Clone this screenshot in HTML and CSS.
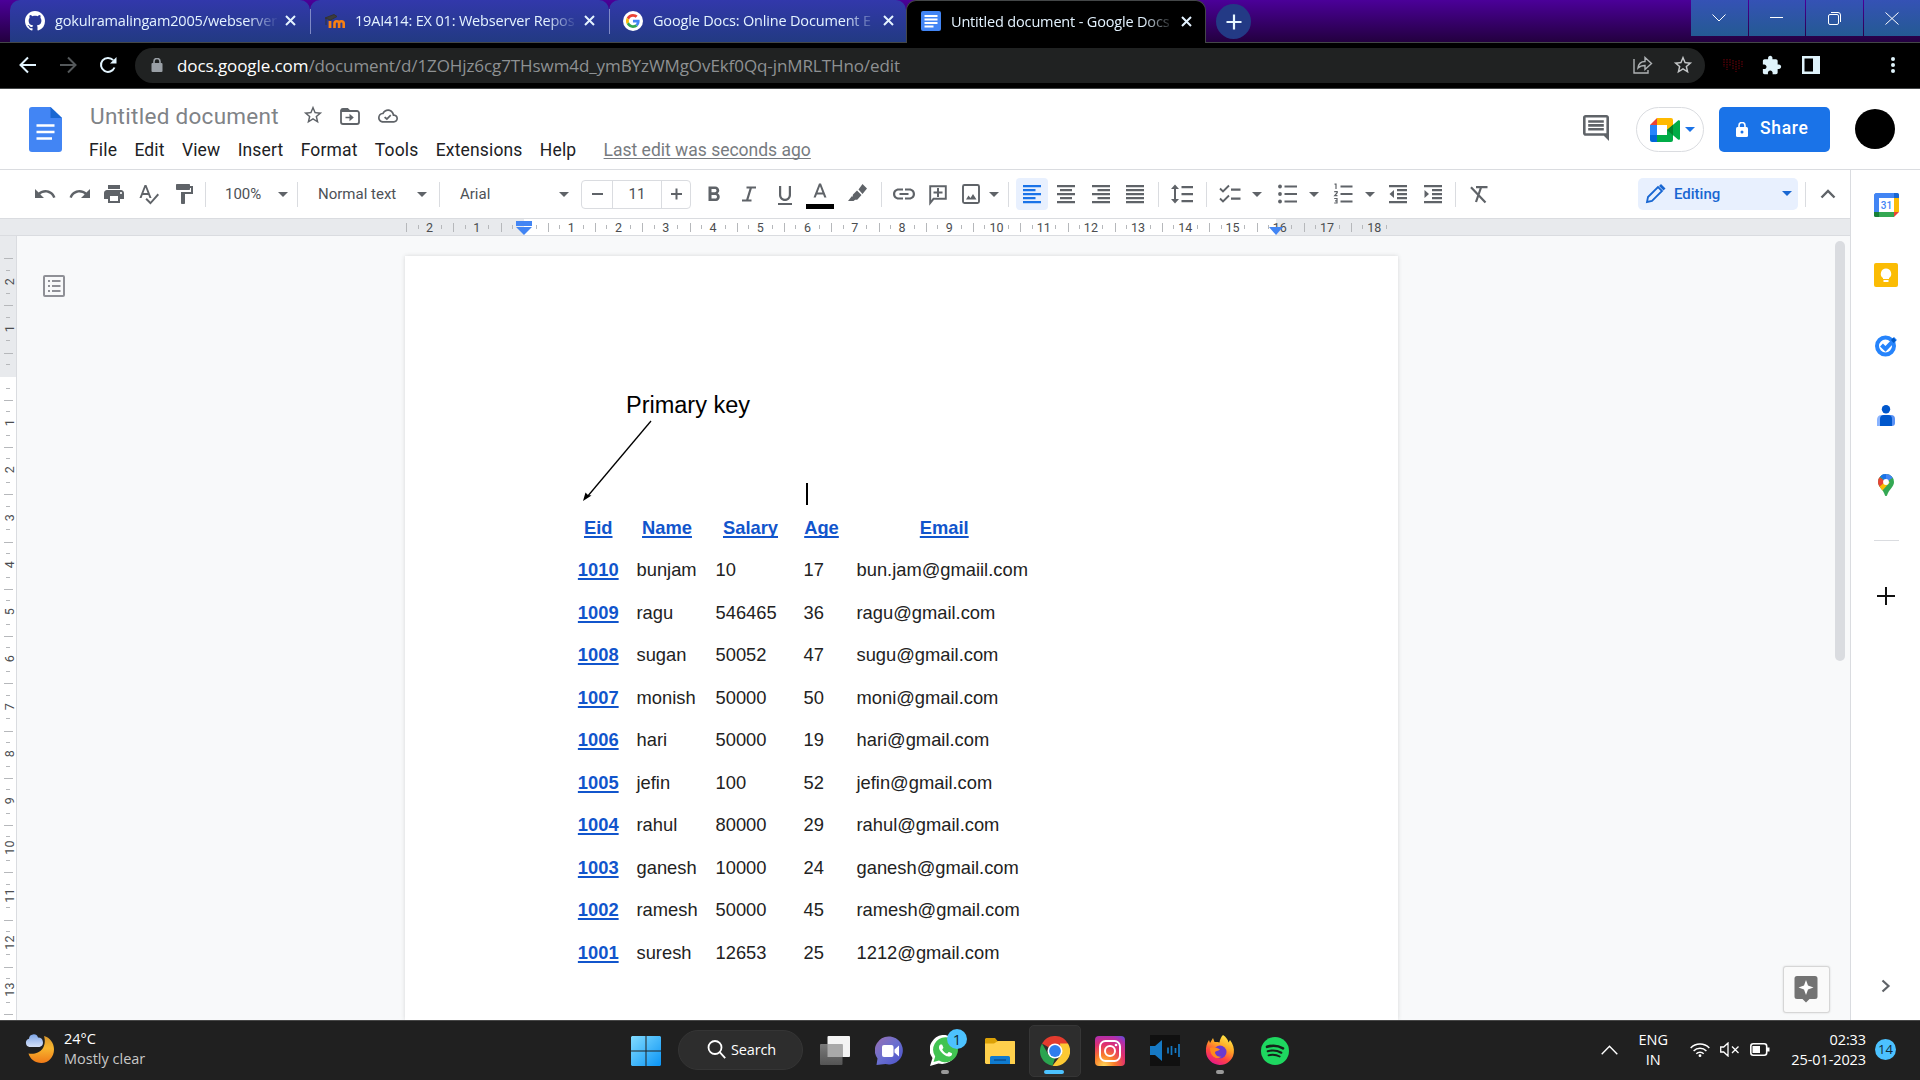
FILE: index.html
```html
<!DOCTYPE html>
<html lang="en">
<head>
<meta charset="utf-8">
<title>Untitled document - Google Docs</title>
<link rel="stylesheet" href="styles.css">
</head>
<body>
<div class="screen">

<div class="tabstrip">
  <div class="tab">
    <svg width="20" height="20" viewBox="0 0 16 16" fill="#fff"><path d="M8 0C3.58 0 0 3.58 0 8c0 3.54 2.29 6.53 5.47 7.59.4.07.55-.17.55-.38 0-.19-.01-.82-.01-1.49-2.01.37-2.53-.49-2.69-.94-.09-.23-.48-.94-.82-1.13-.28-.15-.68-.52-.01-.53.63-.01 1.08.58 1.23.82.72 1.21 1.87.87 2.33.66.07-.52.28-.87.51-1.07-1.78-.2-3.64-.89-3.64-3.95 0-.87.31-1.59.82-2.15-.08-.2-.36-1.02.08-2.12 0 0 .67-.21 2.2.82.64-.18 1.32-.27 2-.27.68 0 1.36.09 2 .27 1.53-1.04 2.2-.82 2.2-.82.44 1.1.16 1.92.08 2.12.51.56.82 1.27.82 2.15 0 3.07-1.87 3.75-3.65 3.95.29.25.54.73.54 1.48 0 1.07-.01 1.93-.01 2.2 0 .21.15.46.55.38A8.013 8.013 0 0016 8c0-4.42-3.58-8-8-8z"/></svg>
    <span class="tab-title">gokulramalingam2005/webserver</span>
    <svg class="x" width="11" height="11" viewBox="0 0 11 11"><path d="M1 1l9 9M10 1l-9 9"/></svg>
  </div>
  <div class="tab divided">
    <svg width="20" height="20" viewBox="0 0 20 20"><path d="M5 17V10" fill="none" stroke="#f98012" stroke-width="2.800"/><path d="M9.500 17v-4.500a2.300 2.300 0 0 1 4.600 0V17M14.100 17v-4.500a2.300 2.300 0 0 1 4.600 0V17" fill="none" stroke="#f98012" stroke-width="2.600"/><path d="M0 7l9-3.500 3 2L5.500 9zM1 7v7" fill="#3c3c3c" stroke="#333"/></svg>
    <span class="tab-title">19AI414: EX 01: Webserver Repos</span>
    <svg class="x" width="11" height="11" viewBox="0 0 11 11"><path d="M1 1l9 9M10 1l-9 9"/></svg>
  </div>
  <div class="tab divided third">
    <svg width="20" height="20" viewBox="0 0 20 20"><circle cx="10" cy="10" r="10" fill="#fff"/><g transform="translate(3 3) scale(.29)"><path fill="#EA4335" d="M24 9.500c3.540 0 6.710 1.220 9.210 3.600l6.850-6.850C35.900 2.380 30.470 0 24 0 14.620 0 6.510 5.380 2.560 13.220l7.980 6.190C12.430 13.720 17.740 9.500 24 9.500z"/><path fill="#4285F4" d="M46.980 24.550c0-1.570-.15-3.090-.38-4.550H24v9.020h12.940c-.58 2.960-2.260 5.480-4.780 7.180l7.730 6c4.510-4.180 7.090-10.360 7.090-17.650z"/><path fill="#FBBC05" d="M10.530 28.590c-.48-1.450-.76-2.990-.76-4.590s.27-3.140.76-4.590l-7.980-6.190C.92 16.460 0 20.120 0 24c0 3.880.92 7.540 2.560 10.780l7.970-6.190z"/><path fill="#34A853" d="M24 48c6.480 0 11.930-2.130 15.890-5.810l-7.730-6c-2.150 1.450-4.920 2.300-8.160 2.300-6.260 0-11.570-4.220-13.470-9.910l-7.980 6.190C6.510 42.620 14.620 48 24 48z"/></g></svg>
    <span class="tab-title">Google Docs: Online Document E</span>
    <svg class="x" width="11" height="11" viewBox="0 0 11 11"><path d="M1 1l9 9M10 1l-9 9"/></svg>
  </div>
  <div class="tab active">
    <svg width="20" height="20" viewBox="0 0 20 20"><rect width="20" height="20" rx="2" fill="#4285f4"/><path d="M3.500 5h13M3.500 8.500h13M3.500 12h13M3.500 15.500h9" stroke="#fff" stroke-width="2"/></svg>
    <span class="tab-title">Untitled document - Google Docs</span>
    <svg class="x" width="11" height="11" viewBox="0 0 11 11"><path d="M1 1l9 9M10 1l-9 9"/></svg>
  </div>
  <div class="newtab"><svg width="16" height="16" viewBox="0 0 16 16"><path d="M8 .5v15M.5 8h15" stroke="#e8f6ff" stroke-width="2.200"/></svg></div>
  <div class="winbtns">
    <span><svg width="14" height="8" viewBox="0 0 14 8"><path d="M.5.500l6.500 6.500 6.500-6.500"/></svg></span>
    <span><svg width="13" height="2" viewBox="0 0 13 2"><path d="M0 .5h13"/></svg></span>
    <span><svg width="13" height="13" viewBox="0 0 13 13"><rect x=".5" y="2.500" width="10" height="10" rx="1.500"/><path d="M3 .500h7a2.500 2.500 0 0 1 2.500 2.500v7"/></svg></span>
    <span><svg width="14" height="13" viewBox="0 0 14 13"><path d="M.5.500l13 12M13.500.500l-13 12"/></svg></span>
  </div>
</div>

<div class="navbar">
  <svg class="nav" width="18" height="18" viewBox="0 0 18 18"><path d="M17 9H2M9 1.500L1.500 9 9 16.500"/></svg>
  <svg class="nav off" width="18" height="18" viewBox="0 0 18 18"><path d="M1 9h15M9 1.500L16.500 9 9 16.500"/></svg>
  <svg class="nav" width="18" height="18" viewBox="0 0 18 18"><path d="M15.500 11.500a7 7 0 1 1-1.300-7.300"/><path d="M17.500 1v6.500H11z" fill="#e3f5ff" stroke="none"/></svg>
  <div class="omnibox">
    <svg width="12" height="14" viewBox="0 0 12 14"><rect x=".5" y="5" width="11" height="9" rx="1" fill="#9aa0a6"/><path d="M3 6V3.500a3 3 0 0 1 6 0V6" fill="none" stroke="#9aa0a6" stroke-width="1.600"/></svg>
    <span class="url"><b>docs.google.com</b>/document/d/1ZOHjz6cg7THswm4d_ymBYzWMgOvEkf0Qq-jnMRLTHno/edit</span>
    <svg width="20" height="18" viewBox="0 0 20 18" fill="none" stroke="#aeb2b4" stroke-width="1.400"><path d="M1 3v14h14v-3"/><path d="M5 12c.5-4 3-6.500 7-6.500V1.500l6.500 6-6.500 6V9.500c-3 0-5 .5-7 2.500z"/></svg>
    <svg class="star" width="22" height="22" viewBox="0 0 24 24" fill="#c4c7c8"><path d="M22 9.240l-7.190-.62L12 2 9.190 8.630 2 9.240l5.460 4.730L5.820 21 12 17.270 18.180 21l-1.630-7.030L22 9.240zM12 15.400l-3.760 2.270 1-4.280-3.320-2.880 4.380-.38L12 6.100l1.710 4.040 4.380.38-3.320 2.880 1 4.280L12 15.400z"/></svg>
  </div>
  <div class="exts">
    <svg width="22" height="14" viewBox="0 0 22 14" stroke="#3a0005" stroke-width="2" stroke-dasharray="1.500 1"><path d="M2 1v8M5 1v11M8 1v7M11 2v9M14 3v11M17 2v9M20 3v6"/></svg>
    <svg width="20" height="20" viewBox="1 0 23 23" fill="#dff3fb"><path d="M20.500 11H19V7c0-1.100-.9-2-2-2h-4V3.500C13 2.120 11.880 1 10.500 1S8 2.120 8 3.500V5H4c-1.100 0-1.990.9-1.990 2v3.800H3.500c1.490 0 2.700 1.210 2.700 2.700s-1.210 2.700-2.700 2.700H2V20c0 1.100.9 2 2 2h3.800v-1.500c0-1.490 1.210-2.700 2.700-2.700 1.490 0 2.700 1.210 2.700 2.700V22H17c1.100 0 2-.9 2-2v-4h1.500c1.380 0 2.500-1.120 2.500-2.500S21.880 11 20.500 11z"/></svg>
    <svg width="18" height="18" viewBox="0 0 18 18"><rect width="18" height="18" fill="#dff3fb"/><rect x="2.500" y="2.500" width="8.500" height="13" fill="#000"/></svg>
    <svg width="4" height="18" viewBox="0 0 4 18" fill="#dff3fb"><circle cx="2" cy="3" r="2"/><circle cx="2" cy="9" r="2"/><circle cx="2" cy="15" r="2"/></svg>
  </div>
</div>

<header class="dochead">
  <svg class="doclogo" width="33" height="45" viewBox="0 0 33 45"><path d="M3 0h18.500L33 11v31a3 3 0 0 1-3 3H3a3 3 0 0 1-3-3V3a3 3 0 0 1 3-3z" fill="#4285f4"/><path d="M21.500 0L33 11H21.500z" fill="#1967d2"/><path d="M7.500 18.500h18M7.500 25h18M7.500 31.500h15.500" stroke="#fff" stroke-width="2.600"/></svg>
  <div class="titles">
    <div class="titlerow">
      <span class="doctitle">Untitled document</span>
      <svg class="i-star" width="22" height="22" viewBox="0 0 24 24"><path d="M22 9.240l-7.190-.62L12 2 9.190 8.630 2 9.240l5.460 4.730L5.820 21 12 17.270 18.180 21l-1.630-7.030L22 9.240zM12 15.400l-3.760 2.270 1-4.280-3.320-2.880 4.380-.38L12 6.100l1.710 4.040 4.380.38-3.320 2.880 1 4.280L12 15.400z"/></svg>
      <svg class="i-move" width="20" height="17" viewBox="0 0 20 17"><path d="M1 2.500V14a2 2 0 0 0 2 2h14a2 2 0 0 0 2-2V5a2 2 0 0 0-2-2H9.500L7.500 1H3a2 2 0 0 0-2 1.500z" fill="none" stroke="#5f6368" stroke-width="1.800"/><path d="M1 1h7l2 3H1z"/><path d="M5.500 8.700h4V5.800l4.300 3.700-4.300 3.700v-2.900h-4z"/></svg>
      <svg class="i-cloud" width="20" height="20" viewBox="0 0 24 24"><path d="M19.350 10.040C18.670 6.590 15.640 4 12 4 9.110 4 6.600 5.640 5.350 8.040 2.340 8.360 0 10.910 0 14c0 3.310 2.690 6 6 6h13c2.760 0 5-2.240 5-5 0-2.640-2.050-4.780-4.650-4.960zM19 18H6c-2.210 0-4-1.790-4-4 0-2.050 1.530-3.760 3.560-3.970l1.070-.11.5-.95C8.080 7.140 9.940 6 12 6c2.620 0 4.880 1.860 5.390 4.430l.3 1.500 1.530.11c1.560.1 2.780 1.410 2.780 2.960 0 1.650-1.350 3-3 3zm-8.300-3.820l-2.090-1.590-1.410 1.410L10.700 17l5.310-5.310-1.410-1.410z"/></svg>
    </div>
    <nav class="menus">
      <span>File</span><span>Edit</span><span>View</span><span>Insert</span><span>Format</span><span>Tools</span><span>Extensions</span><span>Help</span><span class="lastedit">Last edit was seconds ago</span>
    </nav>
  </div>
  <svg class="i-comments" width="26" height="26" viewBox="2 2 20 20"><path d="M21.990 4c0-1.100-.89-2-1.990-2H4c-1.100 0-2 .9-2 2v12c0 1.100.9 2 2 2h14l4 4-.01-18zM20 4v12H4V4h16zM6 12h12v2H6zm0-3h12v2H6zm0-3h12v2H6z"/></svg>
  <div class="meet">
    <svg width="30" height="24" viewBox="0 0 30 24"><path d="M0 7h7V0z" fill="#ea4335"/><path d="M0 7h7v10H0z" fill="#2684fc"/><path d="M0 17h7v7H2a2 2 0 0 1-2-2z" fill="#0066da"/><path d="M7 0h14a2 2 0 0 1 2 2v9l-6 4V7H7z" fill="#ffba00"/><path d="M7 17h10v-5l6-2v12a2 2 0 0 1-2 2H7z" fill="#00ac47"/><path d="M17 12l11-9.500c.8-.6 2-.2 2 .8v17.400c0 1-1.200 1.500-2 .8z" fill="#00ac47"/><path d="M17 12l6-5.200v10.400z" fill="#00832d"/></svg>
    <svg width="10" height="5" viewBox="0 0 10 5"><path d="M0 0h10L5 5z" fill="#1a73e8"/></svg>
  </div>
  <div class="share">
    <svg width="12" height="15" viewBox="0 0 12 15"><rect y="5" width="12" height="10" rx="1.500" fill="#fff"/><path d="M3 6V3.500a3 3 0 0 1 6 0V6" fill="none" stroke="#fff" stroke-width="1.600"/><circle cx="6" cy="10" r="1.500" fill="#1a73e8"/></svg>
    <span>Share</span>
  </div>
  <div class="avatar"></div>
</header>

<div class="workspace">
  <main class="editor">
    <div class="toolbar">
      <svg viewBox="0 0 24 24"><path d="M12.500 8c-2.650 0-5.050.99-6.900 2.600L2 7v9h9l-3.620-3.620c1.390-1.160 3.160-1.880 5.120-1.880 3.540 0 6.550 2.310 7.600 5.500l2.370-.78C21.080 11.030 17.150 8 12.500 8z"/></svg>
      <svg viewBox="0 0 24 24"><path d="M18.400 10.600C16.550 8.990 14.150 8 11.500 8c-4.650 0-8.580 3.030-9.960 7.220L3.900 16c1.050-3.190 4.050-5.500 7.600-5.500 1.950 0 3.730.72 5.120 1.880L13 16h9V7l-3.600 3.600z"/></svg>
      <svg viewBox="0 0 24 24"><path d="M19 8H5c-1.660 0-3 1.340-3 3v6h4v4h12v-4h4v-6c0-1.660-1.340-3-3-3zm-3 11H8v-5h8v5zm3-7c-.55 0-1-.45-1-1s.45-1 1-1 1 .45 1 1-.45 1-1 1zm-1-9H6v4h12V3z"/></svg>
      <svg viewBox="0 0 24 24"><path d="M12.450 16h2.090L9.430 3H7.570L2.460 16h2.090l1.120-3h5.640l1.140 3zm-6.020-5L8.500 5.480 10.570 11H6.430zm14.160 .590l-7.090 8.090L9.830 16l-1.410 1.410 5.090 5.090L22 13l-1.410-1.410z"/></svg>
      <svg viewBox="0 0 24 24"><path d="M18 4V3c0-.55-.45-1-1-1H5c-.55 0-1 .45-1 1v4c0 .55.45 1 1 1h12c.55 0 1-.45 1-1V6h1v4H9v11c0 .55.45 1 1 1h2c.55 0 1-.45 1-1v-9h8V4h-3z"/></svg>
      <i class="sep"></i>
      <span class="zoomtxt">100%</span>
      <b class="arr"></b>
      <i class="sep"></i>
      <span class="styletxt">Normal text</span>
      <b class="arr"></b>
      <i class="sep"></i>
      <span class="fonttxt">Arial</span>
      <b class="arr"></b>
      <div class="stepper"><span><i class="minus"></i></span><span>11</span><span><i class="minus"></i><i class="minus vert"></i></span></div>
      <svg viewBox="0 0 24 24"><path d="M15.600 11.290c.97-.67 1.650-1.770 1.650-2.790 0-2.260-1.750-4-4-4H6.500v14.500h7.540c2.090 0 3.710-1.700 3.710-3.990 0-1.520-.86-2.920-2.150-3.720zM9.500 7h3.500c.83 0 1.500.67 1.500 1.500s-.67 1.700-1.500 1.700h-3.500v-3.200zm4 9.500h-4v-3.500h4c.83 0 1.500.87 1.500 1.700s-.67 1.800-1.500 1.800z"/></svg>
      <svg viewBox="0 0 24 24"><path d="M9.500 5.500H19M5 18.500h9.500M14 5.500L10 18.500" fill="none" stroke="#5f6368" stroke-width="2.200"/></svg>
      <svg viewBox="0 0 24 24"><path d="M12 19c3.310 0 6-2.690 6-6V4h-2.200v9c0 2.100-1.700 3.800-3.800 3.800S8.200 15.100 8.200 13V4H6v9c0 3.310 2.690 6 6 6zm-7 2v2h14v-2H5z"/></svg>
      <svg width="28" height="32" viewBox="-2 -4 28 32" class="tcolor"><path d="M11 1.500L5.500 15.500h2.250l1.120-3h6.250l1.120 3h2.250L13 1.500h-2zm-1.380 9L12 4.170 14.380 10.500H9.620z"/><path d="M-2 22h28v5H-2z" fill="#000"/></svg>
      <svg viewBox="0 0 24 24"><path d="M3 19l4-5 3.500 3.500-2 1.500zM8 12.500l4-4 4.500 4.500-4 4.500c-1 .5-2 .3-3-.7s-2.500-2.500-1.500-4.300zM13.500 7.500L17.500 2l4.500 4.500-4.500 5.500z" /></svg>
      <i class="sep"></i>
      <svg viewBox="0 0 24 24"><path d="M3.200 12c0-2 1.500-3.500 3.300-3.500H11V6.500H6.500c-3 0-5.500 2.300-5.500 5.500s2.500 5.500 5.500 5.500H11v-2H6.500C4.700 15.500 3.200 14 3.200 12zM7.500 13.100h9v-2.200h-9v2.200zM17.500 6.500H13v2h4.500c1.800 0 3.300 1.500 3.300 3.500s-1.500 3.500-3.300 3.500H13v2h4.500c3 0 5.500-2.300 5.500-5.500s-2.500-5.500-5.500-5.500z"/></svg>
      <svg viewBox="0 0 24 24"><path d="M4.200 21V4.200h15.600v12.600H7.500z" fill="none" stroke="#5f6368" stroke-width="1.900"/><path d="M11 6h2v3.500h3.500v2H13V15h-2v-3.500H7.500v-2H11z"/></svg>
      <svg viewBox="0 0 24 24"><rect x="4" y="3" width="16" height="18" rx="1.500" fill="none" stroke="#5f6368" stroke-width="1.900"/><path d="M7 17.500l2.500-4 2 2.500 2.500-4 3.500 5.500z"/></svg>
      <b class="arr"></b>
      <i class="sep"></i>
      <span class="on"><svg viewBox="0 0 24 24"><path d="M3 3h18v2.200H3zM3 7h12.500v2.200H3zM3 11h18v2.200H3zM3 15h12.500v2.200H3zM3 19h18v2.200H3z"/></svg></span>
      <svg viewBox="0 0 24 24"><path d="M3 3h18v2.200H3zM6 7h12v2.200H6zM3 11h18v2.200H3zM6 15h12v2.200H6zM3 19h18v2.200H3z"/></svg>
      <svg viewBox="0 0 24 24"><path d="M3 3h18v2.200H3zM8.500 7H21v2.200H8.500zM3 11h18v2.200H3zM8.500 15H21v2.200H8.500zM3 19h18v2.200H3z"/></svg>
      <svg viewBox="0 0 24 24"><path d="M3 3h18v2.200H3zM3 7h18v2.200H3zM3 11h18v2.200H3zM3 15h18v2.200H3zM3 19h18v2.200H3z"/></svg>
      <i class="sep"></i>
      <svg viewBox="0 0 24 24"><path d="M5 2.500L9 7H6v10h3l-4 4.500L1 17h3V7H1zM11.500 4H23v2.200H11.500zM11.500 11H23v2.200H11.500zM11.500 18H23v2.200H11.500z"/></svg>
      <i class="sep"></i>
      <svg viewBox="0 0 24 24"><path d="M2 6.500l3 3L11 3.500M2 16.500l3 3 6-6" fill="none" stroke="#5f6368" stroke-width="1.900"/><path d="M13 6.500h9.500v2.200H13zM13 15.500h9.500v2.200H13z"/></svg>
      <b class="arr"></b>
      <svg viewBox="0 0 24 24"><circle cx="5" cy="4.500" r="1.900"/><circle cx="5" cy="12" r="1.900"/><circle cx="5" cy="19.500" r="1.900"/><path d="M9.500 3.400H22v2.200H9.500zM9.500 10.900H22v2.200H9.500zM9.500 18.400H22v2.200H9.500z"/></svg>
      <b class="arr"></b>
      <svg viewBox="0 0 24 24"><path d="M9.500 3.400H21.500v2.200H9.500zM9.500 10.900H21.500v2.200H9.500zM9.500 18.400H21.500v2.200H9.500z"/><path d="M3.500 2.200h1.500V7M3.200 9.700h3v1L3.700 13.700h2.800M3.200 16.500h2.800v4.500H3.200M4 18.800h2" fill="none" stroke="#5f6368" stroke-width="1.200"/></svg>
      <b class="arr"></b>
      <svg viewBox="0 0 24 24"><path d="M3 3h18v2.200H3zM11 7h10v2.200H11zM11 11h10v2.200H11zM11 15h10v2.200H11zM3 19h18v2.200H3zM8 8v8l-4.500-4z"/></svg>
      <svg viewBox="0 0 24 24"><path d="M3 3h18v2.200H3zM11 7h10v2.200H11zM11 11h10v2.200H11zM11 15h10v2.200H11zM3 19h18v2.200H3zM3.500 8v8L8 12z"/></svg>
      <i class="sep"></i>
      <svg viewBox="0 0 24 24"><path d="M4 5.300L18.500 20.500M9 5.200H20.500M14 5.500l-5 14.500" fill="none" stroke="#5f6368" stroke-width="2.200"/></svg>
      <i></i>
      <div class="mode"><svg viewBox="0 0 24 24"><path d="M4 20l1-5L15 5l4 4L9 19z" fill="none" stroke="#1967d2" stroke-width="1.800"/><path d="M16 4l2-2 4.500 4.500-2 2z" fill="#1967d2"/></svg><span>Editing</span><b class="arr"></b></div>
      <i class="sep"></i>
      <svg viewBox="0 0 24 24"><path d="M5.500 15.500L12 9l6.500 6.500" fill="none" stroke="#5f6368" stroke-width="2.400"/></svg>
    </div>

    <div class="hruler">
      <div class="hwhite"></div>
      <svg class="hticks" width="993" height="16" shape-rendering="crispEdges" stroke="#b6b8bb"><path d="M1 8H993" stroke-width="9" stroke-dasharray="1 46.250"/><path d="M12.500 7.500H990" stroke-width="4" stroke-dasharray="1 22.620"/></svg>
      <div class="hnums"><span>2</span><span>1</span><span></span><span>1</span><span>2</span><span>3</span><span>4</span><span>5</span><span>6</span><span>7</span><span>8</span><span>9</span><span>10</span><span>11</span><span>12</span><span>13</span><span>14</span><span>15</span><span>16</span><span>17</span><span>18</span></div>
      <svg class="indent-l" width="16" height="14" viewBox="0 0 16 14" fill="#4285f4"><path d="M0 0h16v5H0zM0 6h16l-8 8z"/></svg>
      <svg class="indent-r" width="14" height="8" viewBox="0 0 14 8" fill="#4285f4"><path d="M0 0h14L7 8z"/></svg>
    </div>

    <div class="canvas">
      <div class="vruler">
        <div class="vshade"></div>
        <svg class="vticks" width="16" height="784" shape-rendering="crispEdges" stroke="#b6b8bb"><path d="M8.500 22V784" stroke-width="9" stroke-dasharray="1 46.250"/><path d="M8 33.500V784" stroke-width="4" stroke-dasharray="1 22.620"/></svg>
        <div class="vnums"><span>2</span><span>1</span><span></span><span>1</span><span>2</span><span>3</span><span>4</span><span>5</span><span>6</span><span>7</span><span>8</span><span>9</span><span>10</span><span>11</span><span>12</span><span>13</span></div>
      </div>
      <div class="gutter"><svg width="22" height="22" viewBox="0 0 22 22"><rect x="1" y="1" width="20" height="20" rx="1" fill="none" stroke="#8f9096" stroke-width="2"/><path d="M5 6h2M9 6h8.500M5 11h2M9 11h8.500M5 16h2M9 16h8.500" stroke="#8f9096" stroke-width="2"/></svg></div>
      <div class="page">
        <div class="drawing">
          <span>Primary key</span>
          <svg width="70" height="82" viewBox="0 0 70 82"><path d="M68 1L4 77" stroke="#000" stroke-width="1.300"/><path d="M0 81l2.500-8.500 2.500 2.500 3.500 .5z"/></svg>
          <i class="caret"></i>
        </div>
        <table>
          <tr><th>Eid</th><th>Name</th><th>Salary</th><th>Age</th><th>Email</th></tr>
          <tr><th>1010</th><td>bunjam</td><td>10</td><td>17</td><td>bun.jam@gmaiil.com</td></tr>
          <tr><th>1009</th><td>ragu</td><td>546465</td><td>36</td><td>ragu@gmail.com</td></tr>
          <tr><th>1008</th><td>sugan</td><td>50052</td><td>47</td><td>sugu@gmail.com</td></tr>
          <tr><th>1007</th><td>monish</td><td>50000</td><td>50</td><td>moni@gmail.com</td></tr>
          <tr><th>1006</th><td>hari</td><td>50000</td><td>19</td><td>hari@gmail.com</td></tr>
          <tr><th>1005</th><td>jefin</td><td>100</td><td>52</td><td>jefin@gmail.com</td></tr>
          <tr><th>1004</th><td>rahul</td><td>80000</td><td>29</td><td>rahul@gmail.com</td></tr>
          <tr><th>1003</th><td>ganesh</td><td>10000</td><td>24</td><td>ganesh@gmail.com</td></tr>
          <tr><th>1002</th><td>ramesh</td><td>50000</td><td>45</td><td>ramesh@gmail.com</td></tr>
          <tr><th>1001</th><td>suresh</td><td>12653</td><td>25</td><td>1212@gmail.com</td></tr>
        </table>
      </div>
      <div class="rightgutter">
        <div class="scrollbar"></div>
        <div class="explore"><svg width="24" height="27" viewBox="0 0 24 27"><path d="M3 0h18a2.500 2.500 0 0 1 2.500 2.500v18A2.500 2.500 0 0 1 21 23h-5.500L12 26.500 8.500 23H3a2.500 2.500 0 0 1-2.500-2.500v-18A2.500 2.500 0 0 1 3 0z" fill="#737373"/><path d="M12 4l2 5.500 5.500 2-5.500 2-2 5.500-2-5.500-5.500-2 5.500-2z" fill="#fff"/></svg></div>
      </div>
    </div>
  </main>

  <aside class="sidepanel">
    <svg width="25" height="24" viewBox="0 0 25 24"><path d="M5 5h15v14H5z" fill="#fff"/><path d="M1.500 0H20v5H5v14H0V1.500z" fill="#4285f4"/><path d="M20 0h3.500A1.500 1.500 0 0 1 25 1.500V5h-5z" fill="#1967d2"/><path d="M20 5h5v14h-5z" fill="#fbbc04"/><path d="M5 19h15v5H5z" fill="#34a853"/><path d="M0 19h5v5H1.500A1.500 1.500 0 0 1 0 22.500z" fill="#188038"/><path d="M20 19h5l-5 5z" fill="#ea4335"/><text x="12.500" y="16" text-anchor="middle">31</text></svg>
    <svg width="24" height="24" viewBox="0 0 24 24"><rect width="24" height="24" rx="2" fill="#fbbc04"/><path d="M12 5.500a5.300 5.300 0 0 1 3 9.600V16H9v-.9a5.300 5.300 0 0 1 3-9.600zM9.500 17h5v2h-5z" fill="#fff"/></svg>
    <svg width="24" height="24" viewBox="0 0 24 24"><circle cx="11.500" cy="13" r="8.500" fill="#fff" stroke="#2684fc" stroke-width="4"/><path d="M7.500 12l4 4L21.500 5.500" fill="none" stroke="#2684fc" stroke-width="4"/><path d="M17 7l2.500-2.500 2.500 3-2.500 2.500z" fill="#0057c2"/></svg>
    <svg width="18" height="21" viewBox="0 0 18 21"><path d="M4 10h5v11H0v-6a5 5 0 0 1 4-5z" fill="#8ab4ff"/><path d="M9 10h5a4 4 0 0 1 4 4v4a3 3 0 0 1-3 3H9z" fill="#5a92f5"/><path d="M7 10h4a4 4 0 0 1 4 4v7H3v-7a4 4 0 0 1 4-4z" fill="#0057cc"/><circle cx="9" cy="4.200" r="4.200" fill="#0057cc"/></svg>
    <svg width="16" height="22" viewBox="0 0 16 22"><defs><clipPath id="pin"><path d="M8 0a8 8 0 0 1 8 8c0 5-5 7-7 13.500q-1 1-2 0C5 15 0 13 0 8a8 8 0 0 1 8-8z"/></clipPath></defs><g clip-path="url(#pin)"><path d="M0 0h16v22H0z" fill="#34a853"/><path d="M0 0h16v3L8 8z" fill="#4285f4"/><path d="M0 0h8l0 8z" fill="#1a73e8"/><path d="M0 2l8 6-7 6-2-4z" fill="#ea4335"/><path d="M0 14l8-7 4 1-8 9z" fill="#fbbc04"/></g><circle cx="8" cy="8" r="2.900" fill="#fff"/></svg>
    <hr>
    <svg class="plus" width="18" height="18" viewBox="0 0 18 18"><path d="M9 0v18M0 9h18" stroke="#111" stroke-width="2"/></svg>
    <svg class="collapse" width="10" height="14" viewBox="0 0 10 14"><path d="M1.500 1.500L7.500 7l-6 5.500" fill="none" stroke="#5f6368" stroke-width="2.200"/></svg>
  </aside>
</div>

<footer class="taskbar">
  <div class="weather">
    <svg width="30" height="30" viewBox="0 0 30 30"><defs><linearGradient id="mo" x2="0" y2="1"><stop stop-color="#d9982f"/><stop offset=".45" stop-color="#f7b52e"/><stop offset="1" stop-color="#f07a18"/></linearGradient><linearGradient id="cl" x2="0" y2="1"><stop stop-color="#7fa6e8"/><stop offset="1" stop-color="#d5e1f8"/></linearGradient></defs><path d="M19 2c6 1.500 10 7 10 13.500C29 23 23.500 29 16.500 29 10 29 5 25 3.500 19.500 14 21.500 22.500 14 19 2z" fill="url(#mo)"/><path d="M4.500 13a4.200 4.200 0 0 1-.5-8.200A4.600 4.600 0 0 1 13 3.600 4.800 4.800 0 0 1 14.500 13z" fill="url(#cl)"/></svg>
    <div><p class="bright">24°C</p><p>Mostly clear</p></div>
  </div>
  <div class="apps">
    <div class="app start"><svg width="30" height="30" viewBox="0 0 30 30"><defs><linearGradient id="wn" x2="1" y2="1"><stop stop-color="#82dcff"/><stop offset="1" stop-color="#0a94f5"/></linearGradient></defs><path d="M1 0h13.500v14.500H0V1zM15.500 0H29l1 1v13.500H15.500zM0 15.500h14.500V30H1l-1-1zM15.500 15.500H30V29l-1 1H15.500z" fill="url(#wn)"/></svg></div>
    <div class="search"><svg width="19" height="19" viewBox="0 0 19 19" fill="none" stroke="#fff" stroke-width="1.800"><circle cx="8" cy="7.500" r="6.500"/><path d="M12.700 12.200l5.500 6"/></svg><span>Search</span></div>
    <div class="app"><svg width="30" height="30" viewBox="0 0 30 30"><defs><linearGradient id="tv" x2="0" y2="1"><stop stop-color="#7a7a7a"/><stop offset="1" stop-color="#545454"/></linearGradient></defs><rect x="7.500" y="0" width="22.500" height="21" rx="1" fill="#f4f4f4"/><rect x="0" y="8" width="22.500" height="21" rx="1" fill="url(#tv)"/><path d="M7.500 8h15v13h-15z" fill="#a9a9a9"/></svg></div>
    <div class="app"><svg width="30" height="30" viewBox="0 0 30 30"><defs><linearGradient id="ch" x2="1" y2="1"><stop stop-color="#9a6fb0"/><stop offset=".5" stop-color="#6a6fd0"/><stop offset="1" stop-color="#4a50c8"/></linearGradient></defs><path d="M15.500.500a14 14 0 1 1-5 27.500L1.500 29l1-6.500A14 14 0 0 1 15.500.500z" fill="url(#ch)"/><rect x="7" y="9" width="11.500" height="12" rx="2" fill="#fff"/><path d="M19.500 13.500l4.500-4v11l-4.500-4z" fill="#fff"/></svg></div>
    <div class="app"><svg width="30" height="31" viewBox="0 0 30 31"><path d="M15.500 0A14.500 14.500 0 1 1 8.500 28.500L0 31l2.500-8A14.500 14.500 0 0 1 15.500 0z" fill="#fff"/><path d="M15.500 2.200a12.500 12.500 0 1 1-6.500 23.200L3.500 27l1.700-5.500A12.500 12.500 0 0 1 15.500 2.200z" fill="#41c351"/><g transform="translate(2.500 2.500) scale(1.080)"><path fill="#fff" d="M17.472 14.382c-.297-.149-1.758-.867-2.030-.967-.273-.099-.471-.148-.67.15-.197.297-.767.966-.94 1.164-.173.199-.347.223-.644.075-.297-.15-1.255-.463-2.390-1.475-.883-.788-1.480-1.761-1.653-2.059-.173-.297-.018-.458.13-.606.134-.133.298-.347.446-.52.149-.174.198-.298.298-.497.099-.198.05-.371-.025-.52-.075-.149-.669-1.612-.916-2.207-.242-.579-.487-.5-.669-.51-.173-.008-.371-.01-.57-.01-.198 0-.52.074-.792.372-.272.297-1.040 1.016-1.040 2.479 0 1.462 1.065 2.875 1.213 3.074.149.198 2.096 3.200 5.077 4.487.709.306 1.262.489 1.694.625.712.227 1.360.195 1.871.118.571-.085 1.758-.719 2.006-1.413.248-.694.248-1.289.173-1.413-.074-.124-.272-.198-.57-.347z"/></g></svg><b class="badge">1</b><i class="dot"></i></div>
    <div class="app"><svg width="30" height="28" viewBox="0 0 30 28"><path d="M1 1h9l3 3.500h16V10H0V2z" fill="#dba106"/><path d="M0 6.500h9L13 4h16.500l.5.500V27H1l-1-1z" fill="#ffd04c"/><path d="M5 27v-6.500A1.500 1.500 0 0 1 6.500 19h17a1.500 1.500 0 0 1 1.500 1.500V27z" fill="#0f7bd0"/><path d="M9 23h12" stroke="#0a4f92" stroke-width="1.500"/></svg></div>
    <div class="app current"><svg width="30" height="30" viewBox="0 0 30 30"><path d="M15 15L2 7.500A15 15 0 0 1 28 7.500z" fill="#e33b2e"/><path d="M2 7.500L8.500 18.700 15 22l-2.500 7.800A15 15 0 0 1 2 7.500z" fill="#2aa44f"/><path d="M28 7.500A15 15 0 0 1 12.500 29.800L21.500 18.500 20 7.500z" fill="#fcc934"/><circle cx="15" cy="15" r="7.500" fill="#fff"/><circle cx="15" cy="15" r="5.900" fill="#2f7ded"/></svg><i class="dot wide"></i></div>
    <div class="app"><svg width="30" height="30" viewBox="0 0 30 30"><defs><radialGradient id="ig" cx=".3" cy="1" r="1.200"><stop stop-color="#ffd95a"/><stop offset=".3" stop-color="#fa7d2a"/><stop offset=".6" stop-color="#e0306e"/><stop offset=".85" stop-color="#b02fb0"/><stop offset="1" stop-color="#5b51d8"/></radialGradient></defs><rect width="30" height="30" rx="4" fill="url(#ig)"/><g fill="none" stroke="#fff" stroke-width="2"><rect x="5" y="5" width="20" height="20" rx="5.500"/><circle cx="15" cy="15" r="5"/></g><circle cx="21" cy="9" r="1.300" fill="#fff"/></svg></div>
    <div class="app"><svg width="30" height="31" viewBox="0 0 30 31"><rect width="30" height="31" fill="#101010"/><path d="M0 11h5l7-6v21l-7-6H0z" fill="#1679c4"/><path d="M18 12.500v6M21.500 11v9M25.500 13v5M29 9v13" stroke="#1679c4" stroke-width="1.700"/></svg></div>
    <div class="app"><svg width="30" height="31" viewBox="0 0 30 31"><defs><linearGradient id="ff" x1=".8" y1="0" x2=".3" y2="1"><stop stop-color="#fff04a"/><stop offset=".4" stop-color="#ffa325"/><stop offset=".7" stop-color="#ff4540"/><stop offset="1" stop-color="#e4158d"/></linearGradient></defs><path d="M18 0c3 2 5 4.500 5.500 7.500L25 5c3 4 4.500 8 3.800 13A14 14 0 0 1 1 17C.5 12 2 8 4 5l1 3 3-5 1.500 4c2 0 4 0 5 .5C15 4.500 16 2 18 0z" fill="url(#ff)"/><circle cx="15" cy="17" r="6.500" fill="#6a3ad0"/><path d="M5 13c3-2 8 0 10 1.500-1 1.500-3.500 1-5 2.500 0 3 3 5.500 6.500 4.500-5 4-11.500 0-11.500-8.500z" fill="#ff8a1d"/></svg><i class="dot"></i></div>
    <div class="app"><svg width="28" height="28" viewBox="0 0 28 28"><circle cx="14" cy="14" r="14" fill="#1ed760"/><g fill="none" stroke="#16221a" stroke-linecap="round"><path d="M6 9.800c5-1.500 11.500-1 16 1.500" stroke-width="2.600"/><path d="M6.800 14.200c4.500-1.200 9.500-.8 13.500 1.500" stroke-width="2.200"/><path d="M7.500 18.300c4-1 8-.6 11.200 1.300" stroke-width="1.800"/></g></svg></div>
  </div>
  <div class="tray">
    <svg class="up" width="17" height="10" viewBox="0 0 17 10"><path d="M.7 9.300L8.500 1.300l7.800 8" fill="none" stroke="#fff" stroke-width="1.400"/></svg>
    <div class="lang"><p>ENG</p><p>IN</p></div>
    <svg class="wifi" width="20" height="16" viewBox="0 0 20 16" fill="none" stroke="#fff" stroke-width="1.500"><path d="M.7 6a13 13 0 0 1 18.600 0M3.600 9a9 9 0 0 1 12.800 0M6.300 11.700a5.300 5.300 0 0 1 7.400 0"/><circle cx="10" cy="13.700" r="1.400" fill="#fff" stroke="none"/></svg>
    <svg class="mute" width="20" height="15" viewBox="0 0 20 15" fill="none" stroke="#fff" stroke-width="1.300"><path d="M.7 5v5h3l4.300 4V1L3.700 5zM12 4.500l6.500 6.500M18.500 4.500L12 11"/></svg>
    <svg class="batt" width="20" height="13" viewBox="0 0 20 13"><rect x=".8" y=".8" width="15.900" height="11.400" rx="2.500" fill="none" stroke="#fff" stroke-width="1.600"/><rect x="2.500" y="3" width="7.500" height="7" fill="#fff"/><path d="M17 4.500l2.500 0v4l-2.500 0z" fill="#fff"/></svg>
    <div class="clock"><p>02:33</p><p>25-01-2023</p></div>
    <b class="notif">14</b>
  </div>
</footer>
</div>
</body>
</html>
```
FILE: styles.css
```css
* { box-sizing: border-box; }
body { margin: 0; font-family: Roboto, sans-serif; }
p { margin: 0; }
svg { flex: none; display: block; }
.screen { width: 1920px; height: 1080px; overflow: hidden; display: flex; flex-direction: column; background: #fff; }

/* browser tabs */
.tabstrip { height: 43px; flex: none; display: flex; padding-left: 10px; background: linear-gradient(#4b0099, #23003f); border-bottom: 1px solid #444748; font: 14.500px "Open Sans", sans-serif; letter-spacing: -.17px; color: #e4f3ff; }
.tab { width: 300px; height: 42px; display: flex; align-items: center; gap: 10px; padding: 0 14px 1px 15px; background: linear-gradient(#3238ab, #223a82); border-radius: 10px 10px 0 0; position: relative; }
.tab.divided { width: 299px; }
.tab.third { width: 297px; padding: 0 12px 1px 14px; }
.tab.divided::before { content: ""; position: absolute; left: 0; top: 9px; height: 25px; width: 1px; background: #7f8ac6; }
.tab.active { height: 43px; background: #000; border: 1px solid #444748; border-bottom: 0; padding: 0 13px 2px 14px; }
.tab-title { flex: 1; min-width: 0; margin-right: -6px; white-space: nowrap; -webkit-mask-image: linear-gradient(90deg, #000 85%, transparent 99%); mask-image: linear-gradient(90deg, #000 85%, transparent 99%); }
.x { fill: none; stroke: #e4f3ff; stroke-width: 2; }
.newtab { width: 35px; height: 35px; border-radius: 50%; margin: 4px 0 0 10px; background: #233a85; display: flex; align-items: center; justify-content: center; }
.winbtns { margin-left: auto; height: 36px; display: flex; gap: 1px; }
.winbtns span { width: 56.500px; display: flex; align-items: center; justify-content: center; background: linear-gradient(#3552b5, #245a93); }
.winbtns svg { fill: none; stroke: #fff; stroke-width: 1; }

/* address bar */
.navbar { height: 46px; flex: none; display: flex; align-items: center; background: #000; border-bottom: 1px solid #444748; padding: 0 0 1px 19px; }
.nav { fill: none; stroke: #e3f5ff; stroke-width: 2; margin-right: 22px; }
.nav.off { stroke: #54585a; }
.omnibox { width: 1570px; height: 35px; margin-left: -4px; border-radius: 18px; background: #202222; display: flex; align-items: center; padding-left: 16px; }
.url { margin-left: 14px; margin-right: auto; font: 17px "Open Sans", sans-serif; letter-spacing: -.086px; color: #8e9193; white-space: nowrap; }
.url b { font-weight: 400; color: #fff; }
.star { margin: 0 11px 0 19px; }
.exts { flex: 1; display: grid; grid-template-columns: 38px 40px 38px 1fr 54px; align-items: center; justify-items: center; padding-left: 9px; }
.exts svg:last-child { grid-column: 5; }

/* document header */
.dochead { height: 81px; flex: none; display: flex; border-bottom: 1px solid #dadce0; padding: 18px 25px 0 29px; }
.doclogo { margin-top: -.5px; }
.titles { margin: -1px 0 0 28px; flex: 1; }
.titlerow { height: 20px; display: flex; align-items: center; fill: #5f6368; }
.doctitle { width: 189px; font-size: 22.500px; letter-spacing: .29px; color: #808387; white-space: nowrap; line-height: 26px; }
.i-star { margin: -2px 0 0 23px; }
.i-move { margin-left: 16px; }
.i-cloud { margin-left: 18px; }
.menus { display: flex; gap: 17.300px; margin: 14px 0 0 -1px; font-size: 17.500px; letter-spacing: .15px; line-height: 20px; color: #202124; white-space: nowrap; }
.lastedit { color: #777b80; text-decoration: underline; text-underline-offset: 2px; text-decoration-skip-ink: none; margin-left: 10px; letter-spacing: 0; }
.i-comments { margin: 8px 27px 0 0; fill: #5f6368; }
.meet { width: 68px; height: 45px; border: 1px solid #dadce0; border-radius: 23px; display: flex; align-items: center; gap: 5px; padding-left: 13px; }
.share { width: 111px; height: 45px; margin-left: 15px; border-radius: 5px; background: #1a73e8; color: #fff; font-size: 17.500px; letter-spacing: .7px; font-weight: 500; display: flex; align-items: center; gap: 12px; padding: 0 0 3px 17px; }
.share svg { margin-top: 3px; }
.avatar { width: 40px; height: 40px; border-radius: 50%; background: #000; margin: 2px 0 0 25px; }

.workspace { flex: 1; min-height: 0; display: flex; }
.editor { width: 1850px; display: flex; flex-direction: column; }

/* formatting toolbar */
.toolbar { height: 49px; flex: none; border-bottom: 1px solid #dadce0; display: grid; align-items: center; justify-items: center; padding-left: 27px; fill: #5f6368; color: #4d5156; font-size: 15px;
  grid-template-columns: 35px 35px 33px 37px 34px 8px 64px 19px 10px 110px 20px 14px 108px 20px 123px 34px 36px 35px 36px 38px 10px 36px 32px 34px 12px 16px 32px 36px 34px 34px 12px 36px 12px 36px 18px 42px 12px 46px 8px 48px 22px 22px 26px 146px 160px 14px 32px; }
.toolbar svg { width: 24px; height: 24px; }
.toolbar svg.tcolor { width: 28px; height: 32px; }
.sep { width: 1px; height: 25px; background: #dadce0; }
.arr { border: 5px solid transparent; border-top-color: #5f6368; border-bottom: 0; margin-top: 1px; }
.zoomtxt { justify-self: start; padding-left: 16px; }
.styletxt { justify-self: start; padding-left: 16px; white-space: nowrap; }
.fonttxt { justify-self: start; padding-left: 14px; }
.stepper { width: 110px; height: 29px; border: 1px solid #dadce0; border-radius: 4px; display: grid; grid-template-columns: 30px 49px 29px; margin-left: 1px; }
.stepper span { display: flex; align-items: center; justify-content: center; position: relative; }
.stepper span + span { border-left: 1px solid #dadce0; }
.minus { width: 11px; height: 2px; background: #5f6368; }
.vert { position: absolute; transform: rotate(90deg); }
.on { width: 32px; height: 32px; border-radius: 4px; background: #e8f0fe; fill: #1a73e8; display: flex; align-items: center; justify-content: center; }
.mode { width: 160px; height: 32px; border-radius: 5px; background: #e8f0fe; color: #1967d2; font-weight: 500; display: flex; align-items: center; padding: 0 6px 0 5px; }
.mode span { margin-left: 7px; }
.mode .arr { margin: -1px 0 0 auto; border-top-color: #1967d2; }

/* rulers */
.hruler { height: 17px; flex: none; position: relative; background: #e8eaed; border-bottom: 1px solid #dadce0; }
.hwhite { position: absolute; left: 524px; top: 0; width: 752px; height: 16px; background: #fff; }
.hticks { position: absolute; left: 405px; top: 0; }
.hnums { position: absolute; left: 406px; top: 0; display: flex; font-size: 12.500px; line-height: 17px; color: #4b4d50; }
.hnums span { width: 47.240px; text-align: center; }
.indent-l { position: absolute; left: 516px; top: 2px; }
.indent-r { position: absolute; left: 1269px; top: 8px; }
.canvas { flex: 1; min-height: 0; display: flex; background: #f8f9fa; }
.vruler { width: 17px; position: relative; background: #fff; border-right: 1px solid #dadce0; overflow: hidden; }
.vshade { height: 141px; background: #e8eaed; }
.vticks { position: absolute; left: 0; top: 0; }
.vnums { position: absolute; left: 1px; top: 21.500px; display: flex; flex-direction: column; font-size: 12.500px; color: #4b4d50; }
.vnums span { height: 47.240px; width: 18px; display: flex; align-items: center; justify-content: center; transform: rotate(-90deg); }
.gutter { width: 388px; padding: 39px 0 0 26px; }

/* page */
.page { width: 993px; margin-top: 20px; background: #fff; box-shadow: 0 0 4px rgba(60, 64, 67, .18); padding-left: 164px; font-family: "Liberation Sans", Arial, sans-serif; }
.drawing { height: 250px; position: relative; font-size: 23.500px; line-height: 27px; }
.drawing span { position: absolute; left: 57px; top: 136px; color: #000; }
.drawing svg { position: absolute; left: 14px; top: 164px; }
.caret { position: absolute; left: 237px; top: 227px; width: 2px; height: 22px; background: #000; }
table { width: 471px; table-layout: fixed; border-collapse: collapse; font-size: 18.330px; line-height: 21px; color: #222; }
tr { height: 42.500px; }
td, th { padding: 0; }
td { padding-left: 9px; text-align: left; }
td:last-child { padding-left: 8px; }
th { color: #1155cc; text-decoration: underline 2px; text-underline-offset: 2px; text-decoration-skip-ink: none; }
th:nth-child(1) { width: 58.500px; }
th:nth-child(2) { width: 79px; }
th:nth-child(3) { width: 88px; }
th:nth-child(4) { width: 54px; }
.rightgutter { flex: 1; position: relative; }
.scrollbar { width: 10px; height: 420px; border-radius: 5px; background: #dadce0; margin: 5px 5px 0 auto; }
.explore { position: absolute; right: 20px; bottom: 7px; width: 47px; height: 47px; border: 1px solid #d6d6d6; border-radius: 3px; background: #fafafa; box-shadow: 0 0 2px rgba(0, 0, 0, .15); display: flex; align-items: center; justify-content: center; padding-right: 1px; }

/* side panel */
.sidepanel { width: 70px; border-left: 1px solid #dadce0; display: grid; grid-template-rows: repeat(5, 70px) 40px 72px 1fr; align-items: center; justify-items: center; padding: 0 0 27px 1px; }
.sidepanel text { font: 500 10px Roboto, sans-serif; fill: #4285f4; }
.sidepanel hr { width: 25px; border: 0; border-top: 1px solid #dadce0; margin: 0; }
.collapse { align-self: end; }

/* taskbar */
.taskbar { height: 60px; flex: none; background: #202020; border-top: 1px solid #474747; display: flex; font: 14.500px/20px "Open Sans", sans-serif; color: #fff; position: relative; }
.weather { display: flex; gap: 9px; padding: 8px 0 0 25px; width: 620px; color: #c8c8c8; }
.weather svg { margin-top: 5px; }
.bright { color: #fff; }
.apps { display: flex; }
.app { width: 55px; height: 59px; display: flex; align-items: center; justify-content: center; position: relative; }
.start { padding-right: 3px; }
.search { width: 125px; height: 40px; margin: 9px 4px 0 3px; border-radius: 20px; background: #2d2d2d; border: 1px solid #353535; display: flex; align-items: center; gap: 5px; padding: 0 0 1px 28px; letter-spacing: -.15px; }
.current::before { content: ""; position: absolute; left: 2px; top: 4px; width: 50px; height: 50px; border-radius: 5px; background: #2d2d2d; border: 1px solid #363636; }
.current svg { position: relative; }
.dot { position: absolute; left: 24px; top: 49px; width: 8px; height: 4px; border-radius: 2px; background: #9a9a9a; }
.dot.wide { left: 17px; width: 20px; background: #4cc2ff; }
.badge { position: absolute; left: 30px; top: 8px; width: 20px; height: 20px; border-radius: 50%; background: #4cc2ff; color: #102a38; font: 15px/20px "Open Sans", sans-serif; text-align: center; }
.tray { display: flex; margin-left: auto; align-items: center; padding: 0 24px 2px 0; }
.lang { text-align: center; margin-left: 20px; }
.wifi { margin-left: 22px; }
.mute { margin-left: 10px; }
.batt { margin-left: 10px; }
.clock { text-align: right; width: 96px; letter-spacing: -.1px; }
.notif { width: 21px; height: 21px; border-radius: 50%; background: #4cc2ff; color: #102a38; font: 13px/21px "Open Sans", sans-serif; text-align: center; margin-left: 9px; }
```
